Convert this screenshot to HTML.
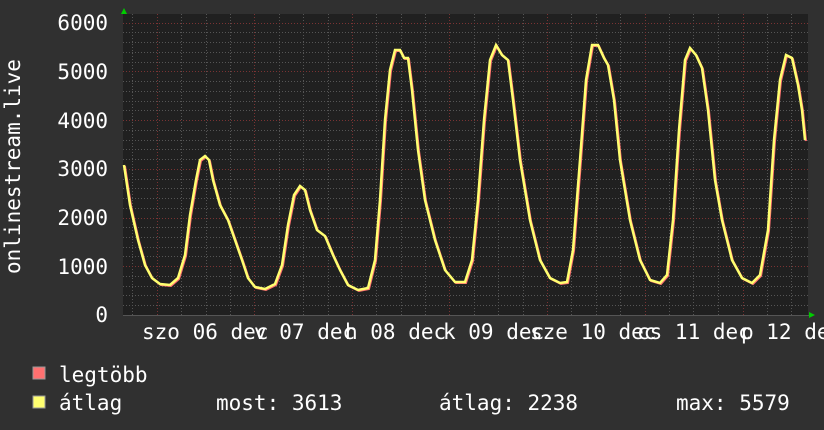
<!DOCTYPE html>
<html><head><meta charset="utf-8"><style>
html,body{margin:0;padding:0;background:#303030;}
svg{display:block}
text{font-family:"DejaVu Sans Mono","Liberation Mono",monospace;fill:#fff;}
</style></head><body>
<svg width="824" height="430" viewBox="0 0 824 430" xmlns="http://www.w3.org/2000/svg">
<rect width="824" height="430" fill="#303030"/>
<rect x="123" y="14" width="685" height="301" fill="#202020"/>
<g stroke="#555" stroke-width="1" stroke-dasharray="1,2">
<path d="M123 32.5H808M123 42.5H808M123 52.5H808M123 62.5H808M123 81.5H808M123 91.5H808M123 101.5H808M123 110.5H808M123 130.5H808M123 140.5H808M123 149.5H808M123 159.5H808M123 179.5H808M123 188.5H808M123 198.5H808M123 208.5H808M123 227.5H808M123 237.5H808M123 247.5H808M123 256.5H808M123 276.5H808M123 286.5H808M123 295.5H808M123 305.5H808"/>
<path d="M132.5 14V315M181.5 14V315M206.5 14V315M230.5 14V315M279.5 14V315M303.5 14V315M328.5 14V315M376.5 14V315M401.5 14V315M425.5 14V315M474.5 14V315M498.5 14V315M523.5 14V315M571.5 14V315M596.5 14V315M620.5 14V315M669.5 14V315M693.5 14V315M718.5 14V315M767.5 14V315M791.5 14V315"/>
</g>
<g stroke="#7a3333" stroke-width="1" stroke-dasharray="1,2">
<path d="M123 23.5H808M123 71.5H808M123 120.5H808M123 169.5H808M123 218.5H808M123 266.5H808"/>
<path d="M157.5 14V315M254.5 14V315M352.5 14V315M449.5 14V315M547.5 14V315M645.5 14V315M743.5 14V315"/>
</g>
<line x1="123" y1="315.5" x2="810" y2="315.5" stroke="#555"/>
<polygon points="121,14 127,14 124,8" fill="#0c0"/>
<polygon points="809,312 809,318 815,315" fill="#0c0"/>
<polyline fill="none" stroke="#ff7070" stroke-width="2" transform="translate(1,1)" points="124,165 130,205 138,240 145,265 152,278 160,284 170,285 178,278 185,255 190,215 196,180 200,160 205,156 209,160 213,180 220,205 228,220 235,240 242,260 248,278 255,287 265,289 275,284 282,265 288,225 294,195 300,186 305,190 310,210 317,230 325,236 333,255 340,270 348,285 358,290 368,288 375,260 380,200 385,120 390,70 395,50 400,50 404,58 408,58 412,90 418,150 425,200 435,240 445,270 455,282 465,282 472,260 478,200 484,120 490,60 496,45 502,55 508,60 513,100 520,160 530,220 540,260 550,278 560,283 567,282 573,250 580,160 586,80 592,45 598,45 604,58 608,65 614,100 620,160 630,220 640,260 650,280 660,283 667,275 673,220 679,130 685,60 690,48 696,55 702,68 708,110 715,180 722,220 732,260 742,278 752,283 760,275 768,230 774,140 780,80 786,55 792,58 798,85 802,110 805,140"/>
<polyline fill="none" stroke="#ffff70" stroke-width="2.5" points="124,165 130,205 138,240 145,265 152,278 160,284 170,285 178,278 185,255 190,215 196,180 200,160 205,156 209,160 213,180 220,205 228,220 235,240 242,260 248,278 255,287 265,289 275,284 282,265 288,225 294,195 300,186 305,190 310,210 317,230 325,236 333,255 340,270 348,285 358,290 368,288 375,260 380,200 385,120 390,70 395,50 400,50 404,58 408,58 412,90 418,150 425,200 435,240 445,270 455,282 465,282 472,260 478,200 484,120 490,60 496,45 502,55 508,60 513,100 520,160 530,220 540,260 550,278 560,283 567,282 573,250 580,160 586,80 592,45 598,45 604,58 608,65 614,100 620,160 630,220 640,260 650,280 660,283 667,275 673,220 679,130 685,60 690,48 696,55 702,68 708,110 715,180 722,220 732,260 742,278 752,283 760,275 768,230 774,140 780,80 786,55 792,58 798,85 802,110 805,140"/>
<g font-size="21" text-anchor="end">
<text x="108" y="30">6000</text>
<text x="108" y="79">5000</text>
<text x="108" y="128">4000</text>
<text x="108" y="176">3000</text>
<text x="108" y="225">2000</text>
<text x="108" y="274">1000</text>
<text x="108" y="322">0</text>
</g>
<text font-size="21" transform="translate(20,274) rotate(-90)">onlinestream.live</text>
<g font-size="21">
<text x="142" y="339">szo 06 dec</text>
<text x="254" y="339">v 07 dec</text>
<text x="345" y="339">h 08 dec</text>
<text x="443" y="339">k 09 dec</text>
<text x="530" y="339">sze 10 dec</text>
<text x="637" y="339">cs 11 dec</text>
<text x="741" y="339">p 12 dec</text>
</g>
<rect x="33" y="367" width="12" height="12" fill="#ff7070" stroke="#999"/>
<rect x="33" y="396" width="12" height="12" fill="#ffff70" stroke="#999"/>
<g font-size="21">
<text x="59" y="382">legtöbb</text>
<text x="59" y="410">átlag</text>
<text x="216" y="410">most: 3613</text>
<text x="439" y="410">átlag: 2238</text>
<text x="676" y="410">max: 5579</text>
</g>
</svg>
</body></html>
